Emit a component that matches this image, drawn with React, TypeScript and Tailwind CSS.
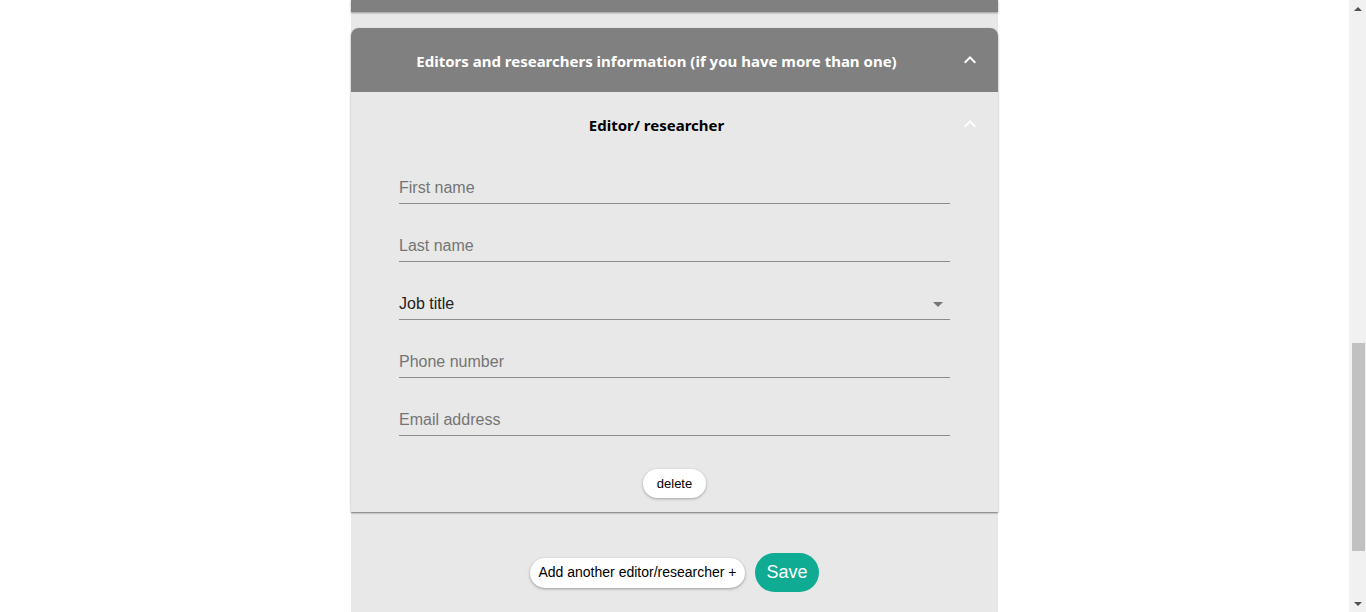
const ExpandLess = ({ className }: { className?: string }) => (
  <svg viewBox="0 0 24 24" width="24" height="24" className={className} fill="currentColor">
    <path d="M12 8l-6 6 1.41 1.41L12 10.83l4.59 4.58L18 14z" />
  </svg>
);

const fields = ["First name", "Last name", "Job title", "Phone number", "Email address"];

const Field = ({ label }: { label: string }) => {
  const isSelect = label === "Job title";
  return (
    <div className="flex h-[33px] items-center border-b border-[#8c8c8c]">
      <span
        className={`flex-1 pt-[1px] text-[16px] ${isSelect ? "text-[#222]" : "text-[#757575]"}`}
      >
        {label}
      </span>
      {isSelect && (
        <svg viewBox="0 0 24 24" width="24" height="24" fill="#757575" className="mt-[1px]">
          <path d="M7 10l5 5 5-5z" />
        </svg>
      )}
    </div>
  );
};

export default function App() {
  return (
    <div className="flex h-[612px] overflow-hidden bg-white font-['Liberation_Sans',Arial,sans-serif]">
      <div className="flex flex-1 justify-center">
        <div className="flex w-[647px] flex-col bg-[#e8e8e8]">
          <div className="h-[12px] bg-[#808080] shadow-[0_1px_2px_rgba(0,0,0,0.35)]" />

          <div className="mt-[16px] rounded-t-[8px] shadow-[0_1px_2px_rgba(0,0,0,0.5)]">
            <div className="flex h-[64px] items-center rounded-t-[8px] bg-[#808080] pl-[16px] pr-[4px]">
              <div className="flex-1 pt-[2px] text-center font-['Noto_Sans',sans-serif] text-[15px] font-bold text-white">
                Editors and researchers information (if you have more than one)
              </div>
              <div className="flex w-[48px] justify-center pb-[1px] text-white">
                <ExpandLess />
              </div>
            </div>

            <div className="bg-[#e8e8e8] pb-[14px]">
              <div className="flex h-[64px] items-center pl-[16px] pr-[4px]">
                <div className="flex-1 pt-[2px] text-center font-['Noto_Sans',sans-serif] text-[15px] font-bold text-black">
                  Editor/ researcher
                </div>
                <div className="flex w-[48px] justify-center text-white">
                  <ExpandLess />
                </div>
              </div>

              <div className="mx-auto mt-[15px] flex w-[551px] flex-col gap-[25px]">
                {fields.map((f) => (
                  <Field key={f} label={f} />
                ))}
              </div>

              <div className="mt-[33px] flex justify-center">
                <button className="h-[29px] rounded-full bg-white px-[14px] text-[13px] text-black shadow-[0_1px_3px_rgba(0,0,0,0.3)]">
                  delete
                </button>
              </div>
            </div>
          </div>

          <div className="flex items-center justify-center gap-[10px] pt-[41px]">
            <button className="h-[30px] w-[215px] rounded-full bg-white text-[14px] text-black shadow-[0_1px_3px_rgba(0,0,0,0.35)]">
              Add another editor/researcher +
            </button>
            <button className="h-[39px] w-[64px] rounded-full bg-[#0fac93] text-[18px] text-white">
              Save
            </button>
          </div>
        </div>
      </div>

      <div className="flex w-[17px] flex-col items-center bg-[#f1f1f1]">
        <div className="flex h-[17px] items-center justify-center">
          <div className="h-0 w-0 border-x-[4px] border-b-[4px] border-x-transparent border-b-[#505050]" />
        </div>
        <div className="flex-1">
          <div className="ml-[1px] mt-[326px] h-[208px] w-[13px] bg-[#c1c1c1]" />
        </div>
        <div className="flex h-[17px] items-center justify-center">
          <div className="h-0 w-0 border-x-[4px] border-t-[4px] border-x-transparent border-t-[#505050]" />
        </div>
      </div>
    </div>
  );
}
